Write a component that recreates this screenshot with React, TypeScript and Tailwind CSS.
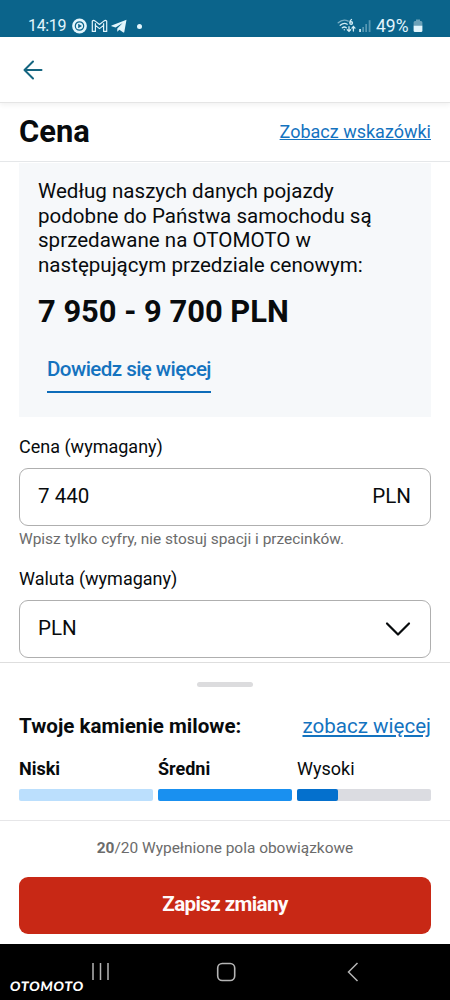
import React from "react";

function StatusBar() {
  return (
    <header className="flex h-[37px] shrink-0 items-end justify-between bg-[#0b648b] pr-[27px] pl-7 text-[#e2f5fc]">
      <div className="flex h-[22px] items-center">
        <span className="w-[38px] text-[16px] leading-[22px] tracking-[-0.35px] whitespace-nowrap">14:19</span>
        <svg className="ml-[6px]" width="15" height="16" viewBox="0 0 15 16" fill="none">
          <circle cx="7.5" cy="8" r="7.4" fill="#e2f5fc" />
          <circle cx="7.5" cy="8" r="4.2" stroke="#0b648b" strokeWidth="1.2" />
          <path d="M6.2 5.8 10 8l-3.8 2.2Z" fill="#0b648b" />
        </svg>
        <svg className="ml-[4px]" width="17" height="16" viewBox="0 0 17 16" fill="none" stroke="#e2f5fc" strokeWidth="1.2" strokeLinejoin="round">
          <path d="M1.3 13.4V3.2q1.1-1.4 2.6-.3L8.5 6.5l4.6-3.6q1.5-1.1 2.6.3v10.2h-3.1V7.4l-4.1 3.2-4.1-3.2v6Z" />
          <path d="M4.4 5.3v2.1M12.6 5.3v2.1" />
        </svg>
        <svg className="ml-[3px]" width="16" height="16" viewBox="0 0 16 16" fill="#e2f5fc">
          <path d="M15.500 1.700.6 7.600q-.7.4 0 .7l4 1.200 7-4.500-5.300 5.400-.1 3.400 2.200-2.100 3.900 2.700q.8.3 1-.5Z" />
        </svg>
        <span className="ml-[10px] h-[5px] w-[5px] rounded-full bg-[#e2f5fc]" />
      </div>
      <div className="flex h-[22px] items-center">
        <svg width="19" height="16" viewBox="0 0 19 16" fill="none" stroke="#d3edf5" strokeWidth="1.3" strokeLinecap="round">
          <path d="M1.2 4.8Q6 .4 11.2 3.1" opacity=".55" />
          <path d="M3.2 7.3q3.6-3 7-1.1M5.3 9.8q2-1.6 4 0" />
          <circle cx="7.3" cy="11.8" r=".7" fill="#d3edf5" stroke="none" />
          <path d="M14.500 1.500q-1.700 1-1.700 3.100M12.800 5a1.350 1.250 0 1 0 2.700 0 1.350 1.250 0 1 0-2.700 0" />
          <path d="M12 8.700v4.600m-1.700-1.600 1.700 1.600 1.600-1.600M16.400 13V8.500m-1.500 1.600 1.500-1.600L18 10.100" />
        </svg>
        <svg className="ml-[3px]" width="13" height="16" viewBox="0 0 13 16" fill="#d3edf5">
          <rect x=".2" y="11" width="1.7" height="3" />
          <g opacity=".38">
            <rect x="3.3" y="9" width="1.7" height="5" />
            <rect x="6.3" y="6" width="1.7" height="8" />
            <rect x="9.7" y="2.2" width="1.8" height="11.8" />
          </g>
        </svg>
        <span className="ml-[4px] w-[36px] text-[17.5px] leading-[22px] whitespace-nowrap">49%</span>
        <svg className="ml-[1px]" width="10" height="16" viewBox="0 0 10 16">
          <path d="M3 1.500h4V3h1q1.400 0 1.400 1.500V8H.6V4.500Q.6 3 2 3h1Z" fill="#6ba1b8" />
          <path d="M.6 7.700h8.800v5Q9.400 14 8 14H2Q.6 14 .6 12.700Z" fill="#e2f5fc" />
        </svg>
      </div>
    </header>
  );
}

function Field({ label, value, children }: { label: string; value: string; children: React.ReactNode }) {
  return (
    <div>
      <label className="block h-[21px] text-[18px] leading-[21px]">{label}</label>
      <div className="mt-[11px] flex h-[58px] items-center justify-between rounded-[9px] border border-[#afafaf] pr-[19px] pb-[2px] pl-[18px] text-[20.570px] leading-6">
        <span>{value}</span>
        {children}
      </div>
    </div>
  );
}

function Milestone({ label, children }: { label: string; children: React.ReactNode }) {
  return (
    <div>
      <div className="h-[22px] text-[18px] leading-[22px]">{label}</div>
      {children}
    </div>
  );
}

export default function App() {
  return (
    <div className="flex h-[1000px] w-[450px] flex-col overflow-hidden bg-white font-['Roboto',sans-serif] text-[#080b0d]">
      <StatusBar />

      <nav className="z-10 flex h-[66px] shrink-0 items-center border-b border-[#e5e5e5] bg-white pl-[23px] shadow-[0_2px_5px_rgba(0,0,0,0.06)]">
        <svg width="20" height="20" viewBox="0 0 20 20" fill="none" stroke="#156580" strokeWidth="2" strokeLinecap="round" strokeLinejoin="round">
          <path d="M18.500 10H1.500M10 1.500 1.500 10l8.500 8.500" />
        </svg>
      </nav>

      <div className="flex h-[59px] shrink-0 items-center justify-between border-b border-[#e5e7e9] px-[19px]">
        <h1 className="text-[30.900px] leading-9 font-bold">Cena</h1>
        <a className="text-[18px] leading-[22px] text-[#1473bf] underline">Zobacz wskazówki</a>
      </div>

      <main className="h-[500px] shrink-0 overflow-hidden px-[19px] pt-px">
        <section className="h-[254px] bg-[#f6f8fa] px-[19px] pt-[16px]">
          <p className="text-[20.570px] leading-[24.700px] whitespace-nowrap">
            Według naszych danych pojazdy<br />
            podobne do Państwa samochodu są<br />
            sprzedawane na OTOMOTO w<br />
            następującym przedziale cenowym:
          </p>
          <p className="mt-4 text-[30.900px] leading-9 font-bold whitespace-nowrap">7 950 - 9 700 PLN</p>
          <a className="mt-[26px] ml-[9px] inline-block h-[37px] border-b-2 border-[#0d6cb9] text-[20.570px] leading-[26px] font-medium tracking-[-0.560px] whitespace-nowrap text-[#1473bf]">
            Dowiedz się więcej
          </a>
        </section>

        <div className="mt-[19px]">
          <Field label="Cena (wymagany)" value="7 440">
            <span>PLN</span>
          </Field>
          <p className="mt-[3px] h-5 text-[15.450px] leading-5 whitespace-nowrap text-[#6b6b6b]">
            Wpisz tylko cyfry, nie stosuj spacji i przecinków.
          </p>
        </div>
        <div className="mt-[19px]">
          <Field label="Waluta (wymagany)" value="PLN">
            <svg className="mt-[2px]" width="26" height="16" viewBox="0 0 26 16" fill="none" stroke="#080b0d" strokeWidth="2.200" strokeLinecap="round" strokeLinejoin="round">
              <path d="m2 2.500 11 11 11-11" />
            </svg>
          </Field>
        </div>
      </main>

      <section className="h-[158px] shrink-0 border-t border-[#dedede] px-[19px] pt-[19px]">
        <div className="mx-auto h-[5px] w-[56px] rounded-full bg-[#dcdcde]" />
        <div className="mt-[26px] flex h-[26px] items-center justify-between whitespace-nowrap">
          <h2 className="text-[20.570px] leading-[26px] font-bold">Twoje kamienie milowe:</h2>
          <a className="text-[20.570px] leading-[26px] text-[#1473bf] underline">zobacz więcej</a>
        </div>
        <div className="mt-[19px] grid grid-cols-3 gap-[5px]">
          <div className="font-bold">
            <Milestone label="Niski">
              <div className="mt-[9px] h-3 rounded-[2px] bg-[#bbdffd]" />
            </Milestone>
          </div>
          <div className="font-bold">
            <Milestone label="Średni">
              <div className="mt-[9px] h-3 rounded-[2px] bg-[#1990f0]" />
            </Milestone>
          </div>
          <Milestone label="Wysoki">
            <div className="mt-[9px] h-3 rounded-[2px] bg-[#dbdce1]">
              <div className="h-3 w-[41px] rounded-[2px] bg-[#0470cd]" />
            </div>
          </Milestone>
        </div>
      </section>

      <footer className="h-[124px] shrink-0 border-t border-[#e6e6e8] px-[19px] pt-[17px]">
        <p className="text-center text-[15.450px] leading-5 text-[#6b6b6b]">
          <b>20</b>/20 Wypełnione pola obowiązkowe
        </p>
        <button className="mt-[19px] flex h-[57px] w-full items-center justify-center rounded-[9px] bg-[#c82815] pb-[3px] text-[20.570px] font-bold tracking-[-0.600px] text-[#fffafa]">
          Zapisz zmiany
        </button>
      </footer>

      <div className="relative flex h-14 shrink-0 bg-black">
        <svg className="mt-[18px] ml-[91px]" width="20" height="20" viewBox="0 0 20 20" stroke="#b5b5b5" strokeWidth="1.500">
          <path d="M2 1v17M9.500 1v17M17 1v17" />
        </svg>
        <svg className="mt-[18px] ml-[105px]" width="20" height="20" viewBox="0 0 20 20" fill="none" stroke="#b5b5b5" strokeWidth="1.600">
          <rect x="1.700" y="1.500" width="17" height="17" rx="4.500" />
        </svg>
        <svg className="mt-[17px] ml-[110px]" width="13" height="22" viewBox="0 0 13 22" fill="none" stroke="#b5b5b5" strokeWidth="1.500">
          <path d="m11.500 2-9 9 9 9" />
        </svg>
        <span className="absolute top-[34px] left-[10px] -skew-x-6 font-['Lato',sans-serif] text-[13px] leading-4 font-black tracking-[0.700px] text-white">OTOMOTO</span>
      </div>
    </div>
  );
}
